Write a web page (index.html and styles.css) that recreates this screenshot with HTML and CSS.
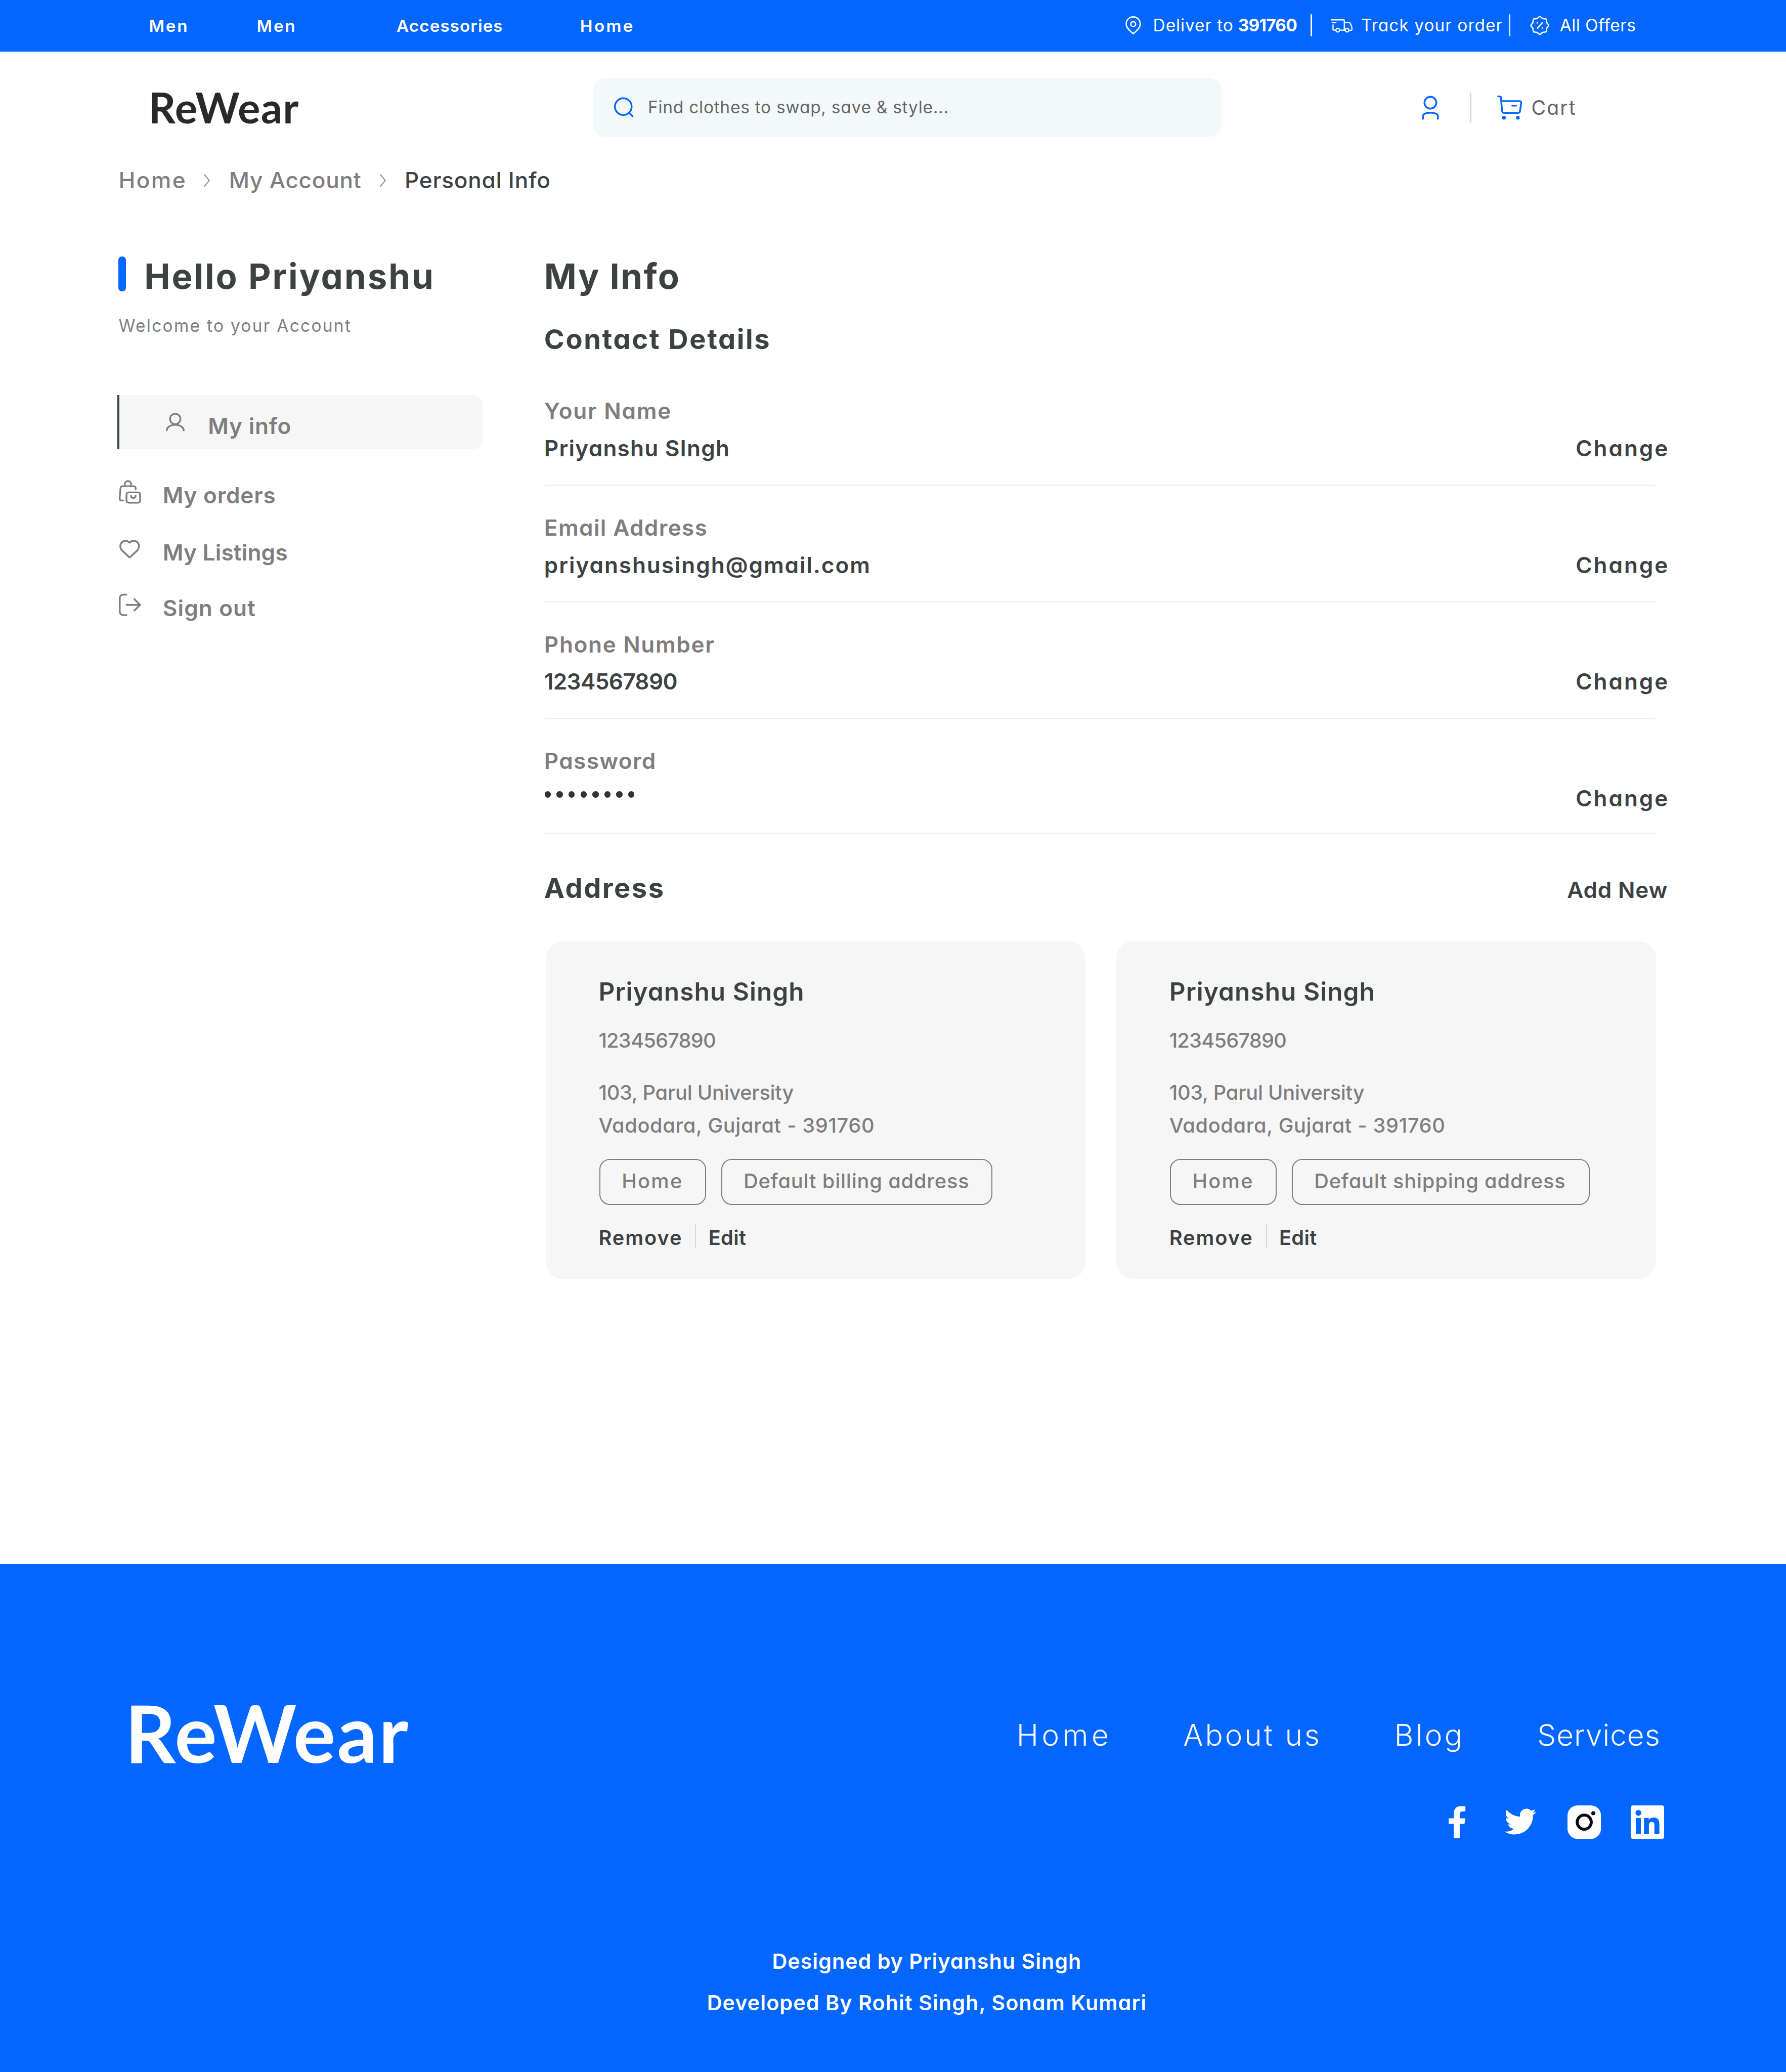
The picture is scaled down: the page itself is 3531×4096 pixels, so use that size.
FILE: index.html
```
<!DOCTYPE html>
<html lang="en">
<head>
<meta charset="utf-8">
<title>ReWear – Personal Info</title>
<link rel="stylesheet" href="styles.css">
</head>
<body>

<div class="topbar">
  <nav class="topnav">
    <a class="ls-81">Men</a>
    <a class="ls-81">Men</a>
    <a class="ls-32">Accessories</a>
    <a class="ls-101">Home</a>
  </nav>
  <div class="toplinks">
    <svg class="ic-pin" viewBox="0 0 45 53"><path d="M22.3 50.5C16 44 2.2 35 2.2 22A20.1 20 0 0 1 42.4 22C42.4 35 29 44 22.3 50.5Z"/><circle cx="22.3" cy="22.8" r="7"/></svg>
    <span class="deliver"><span class="ls-26">Deliver to</span><b class="ls-n24">391760</b></span>
    <i class="bar"></i>
    <svg class="ic-truck" viewBox="15 25 65 42"><path d="M18 28.3H53Q55.3 28.3 55.3 30.6V57.5"/><path d="M20.5 36.3H31.2"/><path d="M22.9 42.3V55.5Q22.9 57.8 25 57.8H30.5"/><path d="M42 57.8H57.3"/><path d="M55.5 36.3H69.5Q71.6 36.3 72.3 38.2L76.3 47.5Q76.9 49 76.9 50.5V56.5Q76.9 58.4 75 58.4H69"/><circle cx="36.4" cy="57.8" r="5.3"/><circle cx="63.1" cy="57.8" r="5.3"/></svg>
    <span class="ls-30">Track your order</span>
    <i class="bar"></i>
    <svg class="ic-badge" viewBox="0 0 56 56"><path d="M51.25 31.8Q46.5 35.65 47.15 41.7Q47.8 47.8 41.7 47.15Q35.65 46.5 31.8 51.25Q28 56 24.2 51.25Q20.35 46.5 14.3 47.15Q8.2 47.8 8.85 41.7Q9.5 35.65 4.75 31.8Q0 28 4.75 24.2Q9.5 20.35 8.85 14.3Q8.2 8.2 14.3 8.85Q20.35 9.5 24.2 4.75Q28 0 31.8 4.75Q35.65 9.5 41.7 8.85Q47.8 8.2 47.15 14.3Q46.5 20.35 51.25 24.2Q56 28 51.25 31.8Z"/><path d="M21 35.7L35 20.3"/><path class="dot" d="M20.6 20.6h.02M35.4 35.2h.02"/></svg>
    <span class="ls-12">All Offers</span>
  </div>
</div>

<header class="header">
  <div class="logo">ReWear</div>
  <div class="search">
    <svg class="ic-search" viewBox="0 0 56 58"><circle cx="26.5" cy="27.3" r="24"/><path d="M43.5 45L53 55"/></svg>
    <span class="ls-21">Find clothes to swap, save &amp; style...</span>
  </div>
  <div class="tools">
    <svg class="ic-account" viewBox="272 242 55 73"><circle cx="299.5" cy="263.8" r="17"/><path d="M278.2 310V302C278.2 296 287 292.3 299.5 292.3S321 296 321 302V310"/></svg>
    <i class="sep"></i>
    <svg class="ic-cart" viewBox="490 242 75 74"><path d="M494.2 246.9L501.8 248L505.5 288.5Q506 294.7 512 294.7H550.5Q556.4 294.7 557 288.5L560.4 266Q561 260.7 556 260.7H503.5"/><path d="M534.5 273.7H545.5"/><circle class="wheel" cx="510.8" cy="308.3" r="5.4"/><circle class="wheel" cx="550.7" cy="308.3" r="5.4"/></svg>
    <span class="ls-52">Cart</span>
  </div>
</header>

<div class="crumbs">
  <span class="ls-57">Home</span>
  <svg class="ic-chev" viewBox="0 0 18 37"><path d="M2 2L15.5 18.5L2 35"/></svg>
  <span class="ls-17">My Account</span>
  <svg class="ic-chev" viewBox="0 0 18 37"><path d="M2 2L15.5 18.5L2 35"/></svg>
  <span class="here ls-17">Personal Info</span>
</div>

<main class="main">
  <aside>
    <div class="hello"><i></i><h1 class="ls-43">Hello Priyanshu</h1></div>
    <p class="welcome ls-67">Welcome to your Account</p>
    <div class="item active">
      <svg class="ic-user" viewBox="0 0 53.5 53"><circle cx="26.7" cy="17.6" r="14.9"/><path d="M2.5 50.4C2.5 41.5 13 34.6 26.7 34.6S51 41.5 51 50.4"/></svg>
      <span class="ls-17">My info</span>
    </div>
    <div class="item orders">
      <svg class="ic-orders" viewBox="22 24 66 70"><path d="M40.3 42V37.7A9.2 9.3 0 0 1 58.7 37.7V42"/><path d="M71.5 52.2V48.5Q71.5 43 66 43H34.2Q28.6 43 28.2 48.5L25.7 77.5Q25.5 84 31.5 84H35.5"/><rect x="45.3" y="60.8" width="39.2" height="29.6" rx="6"/><path d="M58.4 70.8C58.4 79 71.4 79 71.4 70.8"/></svg>
      <span class="ls-17">My orders</span>
    </div>
    <div class="item listings">
      <svg class="ic-heart" viewBox="22 198.5 59 54"><path d="M51.4 207C47.5 203 43.5 201.5 39.5 201.5C31 201.5 24.6 208.5 24.6 217C24.6 222 26.5 226 30 229.5L50 248.4Q51.4 249.6 52.8 248.4L73 229.5C76.5 226 78.3 222 78.3 217C78.3 208.5 72 201.5 63.3 201.5C59.5 201.5 55.4 203 51.4 207Z"/></svg>
      <span class="ls-5">My Listings</span>
    </div>
    <div class="item signout">
      <svg class="ic-out" viewBox="22 352 66 66"><path d="M45.3 355.7H36A10 10 0 0 0 26 365.7V404.4A10 10 0 0 0 36 414.4H45.3"/><path d="M45.3 385H84.3M68 368.7L84.3 385L68 401.3"/></svg>
      <span class="ls-25">Sign out</span>
    </div>
  </aside>

  <section>
    <h1 class="ls-35">My Info</h1>
    <h2 class="contact ls-48">Contact Details</h2>

    <div class="field">
      <label class="ls-40">Your Name</label>
      <div class="row"><span class="ls-27">Priyanshu SIngh</span><a class="change">Change</a></div>
    </div>
    <div class="field">
      <label class="ls-31">Email Address</label>
      <div class="row"><span class="ls-43">priyanshusingh@gmail.com</span><a class="change">Change</a></div>
    </div>
    <div class="field">
      <label class="ls-37">Phone Number</label>
      <div class="row"><span class="ls-n16">1234567890</span><a class="change">Change</a></div>
    </div>
    <div class="field password">
      <label class="ls-29">Password</label>
      <div class="row"><span class="dots"><i></i><i></i><i></i><i></i><i></i><i></i><i></i><i></i></span><a class="change">Change</a></div>
    </div>

    <div class="address-head"><h2 class="ls-46">Address</h2><a class="ls-17">Add New</a></div>

    <div class="cards">
      <article class="card">
        <h3>Priyanshu Singh</h3>
        <p class="phone">1234567890</p>
        <p class="street"><span class="ls-n7">103, Parul University</span><span class="ls-15">Vadodara, Gujarat - 391760</span></p>
        <div class="chips"><span class="chip ls-57">Home</span><span class="chip wide ls-20">Default billing address</span></div>
        <div class="actions"><a class="ls-49">Remove</a><i></i><a class="ls-8">Edit</a></div>
      </article>
      <article class="card">
        <h3>Priyanshu Singh</h3>
        <p class="phone">1234567890</p>
        <p class="street"><span class="ls-n7">103, Parul University</span><span class="ls-15">Vadodara, Gujarat - 391760</span></p>
        <div class="chips"><span class="chip ls-57">Home</span><span class="chip wider ls-20">Default shipping address</span></div>
        <div class="actions"><a class="ls-49">Remove</a><i></i><a class="ls-8">Edit</a></div>
      </article>
    </div>
  </section>
</main>

<footer class="footer">
  <div class="foot-top">
    <div class="foot-logo">ReWear</div>
    <div class="foot-right">
      <nav class="foot-nav">
        <a class="ls-111">Home</a>
        <a class="ls-67">About us</a>
        <a class="ls-74">Blog</a>
        <a class="ls-17">Services</a>
      </nav>
      <div class="social">
        <svg viewBox="0 0 96 96"><path d="M71.3 2.8V17H65.5C57.5 17 55 20.5 55 27.3V37H70.7L68.7 53H55V93.3Q46.4 94.2 37.8 93.3V53H23.2V37H37.8V25.7C37.8 10 45 2.3 58 2.3C63.5 2.3 68.5 2.5 71.3 2.8Z"/></svg>
        <svg viewBox="-0.53 -0.2 25.3 25.3"><path d="M23.953 4.57a10 10 0 01-2.825.775 4.958 4.958 0 002.163-2.723c-.951.555-2.005.959-3.127 1.184a4.92 4.92 0 00-8.384 4.482C7.69 8.095 4.067 6.13 1.64 3.162a4.822 4.822 0 00-.666 2.475c0 1.71.87 3.213 2.188 4.096a4.904 4.904 0 01-2.228-.616v.06a4.923 4.923 0 003.946 4.827 4.996 4.996 0 01-2.212.085 4.936 4.936 0 004.604 3.417 9.867 9.867 0 01-6.102 2.105c-.39 0-.779-.023-1.17-.067a13.995 13.995 0 007.557 2.209c9.053 0 13.998-7.496 13.998-13.985 0-.21 0-.42-.015-.63A9.935 9.935 0 0024 4.59z"/></svg>
        <svg viewBox="0 0 96 96"><rect width="96" height="96" rx="29"/><circle class="lens" cx="48" cy="48" r="20.2"/><circle class="flash" cx="74" cy="22.3" r="5.8"/></svg>
        <svg viewBox="0 0 96 96"><rect width="96" height="96" rx="6.5"/><g class="cut"><circle cx="22" cy="21.4" r="8.4"/><path d="M14.9 36H29V81.7H14.9Z"/><path d="M38.2 36H51.5V42.3C53.5 38 58.5 34.8 65.5 34.8C79.5 34.8 82.1 44 82.1 56.3V81.7H68V59C68 53 68 47 60.8 47S52.1 52.5 52.1 58.8V81.7H38.2Z"/></g></svg>
      </div>
    </div>
  </div>
  <div class="credits">
    <p class="ls-23">Designed by Priyanshu Singh</p>
    <p class="ls-25">Developed By Rohit Singh, Sonam Kumari</p>
  </div>
</footer>

</body>
</html>
```

FILE: styles.css
```
/* 1rem = 100 design units; the design is 5120 units wide */
html { font-size: 68.965px; }

* { box-sizing: border-box; }

body {
  margin: 0;
  height: 4096px;
  display: flex;
  flex-direction: column;
  background: #fff;
  color: #3c4242;
  font-family: Inter, "Open Sans", sans-serif;
  font-feature-settings: "cv11";
  overflow: hidden;
}

h1, h2, h3, p { margin: 0; }
svg { display: block; fill: none; stroke: currentColor; stroke-linecap: round; stroke-linejoin: round; }
span, a, p, h1, h2, h3 { white-space: nowrap; }

/* Tracking */
.ls-n24 { letter-spacing: -.0244em; }
.ls-n16 { letter-spacing: -.0158em; }
.ls-n7 { letter-spacing: -.0067em; }
.ls-5 { letter-spacing: .0048em; }
.ls-8 { letter-spacing: .0084em; }
.ls-12 { letter-spacing: .0118em; }
.ls-15 { letter-spacing: .0154em; }
.ls-17 { letter-spacing: .0171em; }
.ls-20 { letter-spacing: .0204em; }
.ls-21 { letter-spacing: .0214em; }
.ls-23 { letter-spacing: .0226em; }
.ls-25 { letter-spacing: .0248em; }
.ls-26 { letter-spacing: .0263em; }
.ls-27 { letter-spacing: .0268em; }
.ls-29 { letter-spacing: .0294em; }
.ls-30 { letter-spacing: .03em; }
.ls-31 { letter-spacing: .0308em; }
.ls-32 { letter-spacing: .0318em; }
.ls-35 { letter-spacing: .0345em; }
.ls-37 { letter-spacing: .037em; }
.ls-40 { letter-spacing: .0396em; }
.ls-43 { letter-spacing: .0426em; }
.ls-46 { letter-spacing: .0459em; }
.ls-48 { letter-spacing: .0476em; }
.ls-49 { letter-spacing: .049em; }
.ls-52 { letter-spacing: .0519em; }
.ls-57 { letter-spacing: .0569em; }
.ls-67 { letter-spacing: .0673em; }
.ls-74 { letter-spacing: .0735em; }
.ls-81 { letter-spacing: .081em; }
.ls-101 { letter-spacing: .1006em; }
.ls-111 { letter-spacing: .1107em; }

/* Top bar */
.topbar {
  flex: none;
  height: 1.48rem;
  padding-left: 4.27rem;
  display: grid;
  grid-template-columns: 27.99rem auto;
  align-items: center;
  background: #0266ff;
  color: #fff;
}
.topnav {
  display: grid;
  grid-template-columns: 3.09rem 4.01rem 5.26rem auto;
  font-size: .482rem;
  font-weight: 600;
}
.toplinks {
  display: grid;
  grid-template-columns: .795rem 4.515rem .565rem .885rem 4.245rem .595rem .855rem auto;
  align-items: center;
  font-size: .486rem;
  padding-bottom: .03rem;
}
.toplinks svg { stroke-width: 3.8; }
.deliver { display: flex; gap: .13rem; }
.bar { width: .04rem; height: .64rem; border-radius: .02rem; background: #fff; }
.ic-pin { width: .45rem; height: .53rem; margin-left: .01rem; }
.ic-truck { width: .65rem; height: .42rem; margin-top: .05rem; }
.toplinks .ic-truck { stroke-width: 3.4; }
.ic-badge { width: .56rem; height: .56rem; margin-top: .01rem; }
.toplinks .ic-badge .dot { stroke-width: 4.4; }

/* Header */
.header {
  flex: none;
  height: 1.7rem;
  margin-top: .747rem;
  padding-left: 4.26rem;
  display: grid;
  grid-template-columns: 12.74rem 18.02rem auto;
  align-items: center;
}
.logo {
  font: 700 1.208rem/1.4rem Lato, sans-serif;
  letter-spacing: .015em;
  color: #292929;
}
.search {
  height: 1.7rem;
  padding-left: .61rem;
  display: grid;
  grid-template-columns: .965rem auto;
  align-items: center;
  border-radius: .36rem;
  background: #f3f9fb;
  color: #666;
  font-size: .486rem;
}
.search span { padding-bottom: .02rem; }
.ic-search { width: .56rem; height: .58rem; color: #0266ff; stroke-width: 5; }
.tools {
  padding-left: 5.71rem;
  display: grid;
  grid-template-columns: 1.405rem .765rem 1rem auto;
  align-items: center;
  color: #666;
  font-size: .569rem;
  padding-top: .02rem;
}
.tools span { padding-bottom: .02rem; }
.ic-account { width: .55rem; height: .73rem; color: #0266ff; stroke-width: 5; }
.sep { width: .04rem; height: .87rem; background: #d9d9d9; }
.ic-cart { width: .75rem; height: .74rem; color: #0266ff; stroke-width: 5; }
.ic-cart .wheel { fill: currentColor; stroke: none; }

/* Breadcrumb */
.crumbs {
  flex: none;
  margin-top: .845rem;
  padding-left: 3.4rem;
  display: grid;
  grid-template-columns: 2.45rem .715rem 4.33rem .705rem auto;
  align-items: center;
  font-size: .64rem;
  font-weight: 500;
  line-height: .8rem;
  color: #807d7e;
}
.crumbs .here { color: #3c4242; }
.ic-chev { width: .18rem; height: .37rem; stroke-width: 2.8; }

/* Main */
.main {
  flex: 1;
  padding: 1.65rem 0 0 3.4rem;
  display: grid;
  grid-template-columns: 12.2rem 32.255rem;
  align-items: start;
}
h1 { font-size: .998rem; line-height: 1.4rem; font-weight: 700; }
h2 { font-size: .786rem; line-height: 1rem; font-weight: 700; }

.hello { display: flex; }
.hello i { width: .215rem; height: 1rem; margin: .13rem .52rem 0 0; border-radius: .1rem; background: #0266ff; }
.welcome { margin-top: .43rem; font-size: .486rem; line-height: .6rem; color: #807d7e; }
.item {
  height: .8rem;
  display: grid;
  grid-template-columns: 1.265rem auto;
  grid-template-rows: .8rem;
  align-items: center;
  font-size: .64rem;
  font-weight: 600;
  line-height: .8rem;
  color: #807d7e;
}
.item svg { stroke-width: 5; }
.active {
  width: 10.49rem;
  height: 1.56rem;
  margin: 1.67rem 0 0 -.04rem;
  padding-left: 1.335rem;
  grid-template-columns: 1.21rem auto;
  grid-template-rows: 1.56rem;
  border-left: .07rem solid #3c4242;
  border-radius: 0 .3rem .3rem 0;
  background: #f6f6f6;
}
.active span { padding-top: .23rem; }
.ic-user { width: .535rem; height: .53rem; }
.orders { margin-top: .93rem; }
.listings { margin-top: .83rem; }
.signout { margin-top: .8rem; }
.ic-orders { width: .66rem; height: .7rem; margin-bottom: .24rem; }
.ic-heart { width: .59rem; height: .54rem; margin: 0 0 .19rem .02rem; }
.ic-out { width: .66rem; height: .66rem; margin-bottom: .19rem; }

/* Contact fields */
.contact { margin-top: .605rem; margin-bottom: 1.1rem; }
.field {
  height: 3.345rem;
  font-size: .64rem;
  font-weight: 600;
  line-height: .9rem;
}
.field label { display: block; margin-bottom: .17rem; color: #807d7e; }
.row { display: flex; justify-content: space-between; }
.change { letter-spacing: .0655em; }
.field::after { content: ""; display: block; width: 31.84rem; height: .04rem; margin: .595rem 0 0 .01rem; background: #edeef2; }
.password { height: 2.565rem; }
.password::after { margin-top: .53rem; }
.dots { display: flex; gap: .162rem; padding: .25rem 0 0 .015rem; }
.dots i { width: .18rem; height: .18rem; border-radius: 50%; background: #333; }

/* Addresses */
.address-head { margin-top: 1.03rem; padding-right: .045rem; display: flex; justify-content: space-between; }
.address-head a { font-size: .64rem; font-weight: 600; line-height: 1rem; padding-top: .055rem; }
.cards { margin: .98rem 0 0 .04rem; display: flex; gap: .885rem; }
.card {
  width: 15.475rem;
  height: 9.67rem;
  padding: .94rem 0 0 1.52rem;
  border-radius: .48rem;
  background: #f6f6f6;
  font-size: .577rem;
  font-weight: 500;
  line-height: .9rem;
  color: #807d7e;
}
.card h3 { font-size: .719rem; font-weight: 600; line-height: 1rem; letter-spacing: .0205em; color: #3c4242; }
.phone { margin-top: .45rem; letter-spacing: -.0205em; }
.street { margin-top: .555rem; display: flex; flex-direction: column; line-height: .95rem; }
.chips { margin: .48rem 0 0 .02rem; display: flex; gap: .435rem; }
.chip {
  width: 3.056rem;
  height: 1.326rem;
  padding: 0 0 .05rem .615rem;
  border: .036rem solid #807d7e;
  border-radius: .3rem;
  line-height: 1.22rem;
}
.chip.wide { width: 7.78rem; }
.chip.wider { width: 8.54rem; }
.actions { margin-top: .495rem; display: grid; grid-template-columns: 2.77rem .38rem auto; font-weight: 600; color: #3c4242; }
.actions i { width: .03rem; height: .67rem; margin-top: .06rem; background: #d9d9d9; }

/* Footer */
.footer {
  flex: none;
  height: 14.56rem;
  padding-top: 4.35rem;
  background: #0266ff;
  color: #fff;
}
.foot-top { display: flex; padding-left: 3.58rem; }
.foot-logo { width: 25.56rem; font: 700 2.268rem/2.4rem Lato, sans-serif; letter-spacing: .0193em; margin-top: -.72rem; }
.foot-nav {
  display: grid;
  grid-template-columns: 4.78rem 6.05rem 4.1rem auto;
  font-size: .848rem;
  font-weight: 300;
  line-height: 1.1rem;
  color: #f6f6f6;
  font-feature-settings: normal;
}
.social { margin: 1.47rem 0 0 12.15rem; display: flex; gap: .86rem; }
.social svg { width: .96rem; height: .96rem; fill: #fff; stroke: none; }
.social .lens { fill: none; stroke: #0a0a0a; stroke-width: 8.5; }
.social .flash { fill: #0a0a0a; }
.social .cut { fill: #0266ff; }
.credits { margin-top: 2.905rem; padding-left: 1.94rem; text-align: center; font-size: .6rem; font-weight: 600; line-height: 1.2rem; }
```
